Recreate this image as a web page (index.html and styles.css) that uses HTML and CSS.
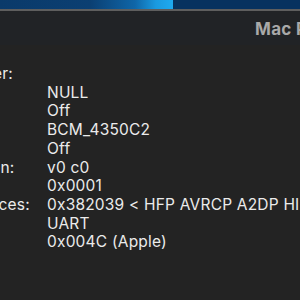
FILE: index.html
```html
<!DOCTYPE html>
<html>
<head>
<meta charset="utf-8">
<link rel="stylesheet" href="styles.css">
</head>
<body>
<div class="desktop"><div class="glow"></div><div class="navy"></div></div>
<div class="window">
  <header class="titlebar"><span class="title">Mac Pro</span></header>
  <main class="info">
    <div class="heading">Bluetooth Controller:</div>
    <dl class="props">
      <dt>Address:</dt><dd>NULL</dd>
      <dt>State:</dt><dd>Off</dd>
      <dt>Chipset:</dt><dd>BCM_4350C2</dd>
      <dt>Discoverable:</dt><dd>Off</dd>
      <dt>Firmware Version:</dt><dd>v0 c0</dd>
      <dt>Product ID:</dt><dd>0x0001</dd>
      <dt>Supported services:</dt><dd>0x382039 &lt; HFP AVRCP A2DP HID Braille LEA AACP GATT SerialPort &gt;</dd>
      <dt>Transport:</dt><dd>UART</dd>
      <dt>Vendor ID:</dt><dd>0x004C (Apple)</dd>
    </dl>
  </main>
</div>
</body>
</html>
```
FILE: styles.css
```css
html, body {
  margin: 0;
  padding: 0;
  width: 300px;
  height: 300px;
  overflow: hidden;
  background: #232323;
}
body {
  font-family: Inter, "Liberation Sans", Arial, sans-serif;
}
.desktop {
  height: 9px;
  display: flex;
  background: linear-gradient(90deg, #0a3a6a 0%, #0b3f72 30%, #0f66a8 45%, #1a9ae0 52%, #1eaaf0 57.6%);
}
.glow {
  width: 173px;
}
.navy {
  flex: 1;
  background: #07325f;
}
.window {
  border-top: 2px solid #5e5e5e;
  background: #232323;
}
.titlebar {
  height: 34px;
  background: #212326;
  display: flex;
  padding-left: 255px;
  overflow: hidden;
  white-space: nowrap;
}
.title {
  font-size: 17px;
  font-weight: bold;
  letter-spacing: 0.3px;
  color: #a9a9a9;
  line-height: 16px;
  margin-top: 10px;
}
.info {
  margin-left: -142px;
  font-size: 15.5px;
  letter-spacing: 0.2px;
  line-height: 18.7px;
  color: #ebebeb;
  white-space: nowrap;
  padding-top: 20px;
}
.props {
  margin: 0;
  display: grid;
  grid-template-columns: 168.5px auto;
  padding-left: 20.5px;
}
.props dt, .props dd {
  margin: 0;
}
```
